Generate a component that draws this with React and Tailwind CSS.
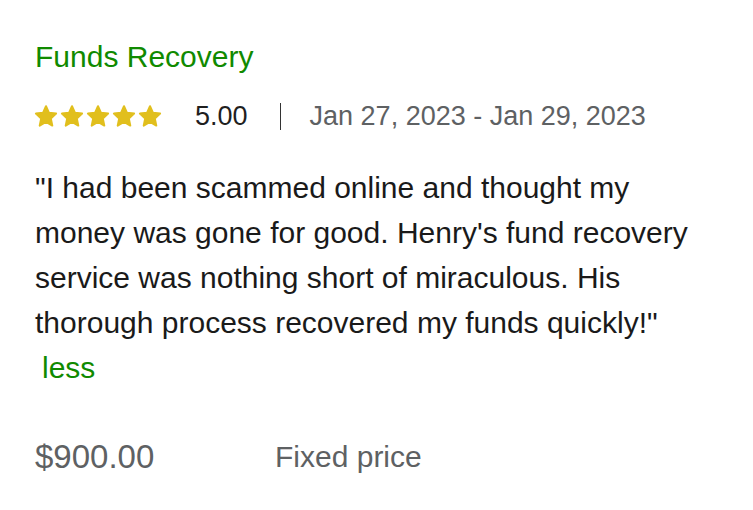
import React from "react";

const Star = () => (
  <svg viewBox="0 0 24 24" className="h-[24px] w-[24px]" fill="#e1bf1d" stroke="#e1bf1d" strokeWidth="2" strokeLinejoin="round">
    <path d="M12 2.2l3 6.6 7.1.8-5.3 4.9 1.5 7.1L12 18l-6.3 3.6 1.5-7.1-5.3-4.9 7.1-.8z" />
  </svg>
);

export default function App() {
  return (
    <div className="min-h-screen bg-white px-[35px] pt-[40px] font-['Liberation_Sans',Arial,sans-serif]">
      <h3 className="text-[30px] leading-[34px] text-[#108a00]">Funds Recovery</h3>

      <div className="mt-[25px] flex h-[34px] items-center text-[27px]">
        <div className="-ml-px flex gap-[2px]">
          <Star />
          <Star />
          <Star />
          <Star />
          <Star />
        </div>
        <span className="ml-[33px] text-[#1f1f1f]">5.00</span>
        <span className="ml-[32px] mr-[29px] h-[27px] w-px bg-[#333]" />
        <span className="text-[#5e6163]">Jan 27, 2023 - Jan 29, 2023</span>
      </div>

      <p className="mt-[32px] text-[30px] leading-[45px] text-[#1a1a1a]">
        "I had been scammed online and thought my
        <br />
        money was gone for good. Henry's fund recovery
        <br />
        service was nothing short of miraculous. His
        <br />
        thorough process recovered my funds quickly!"
        <br />
        <button className="ml-[7px] text-[#108a00]">less</button>
      </p>

      <div className="mt-[50px] flex items-center text-[30px] leading-[34px] text-[#5e6163]">
        <span className="w-[240px] text-[33px]">$900.00</span>
        <span>Fixed price</span>
      </div>
    </div>
  );
}
